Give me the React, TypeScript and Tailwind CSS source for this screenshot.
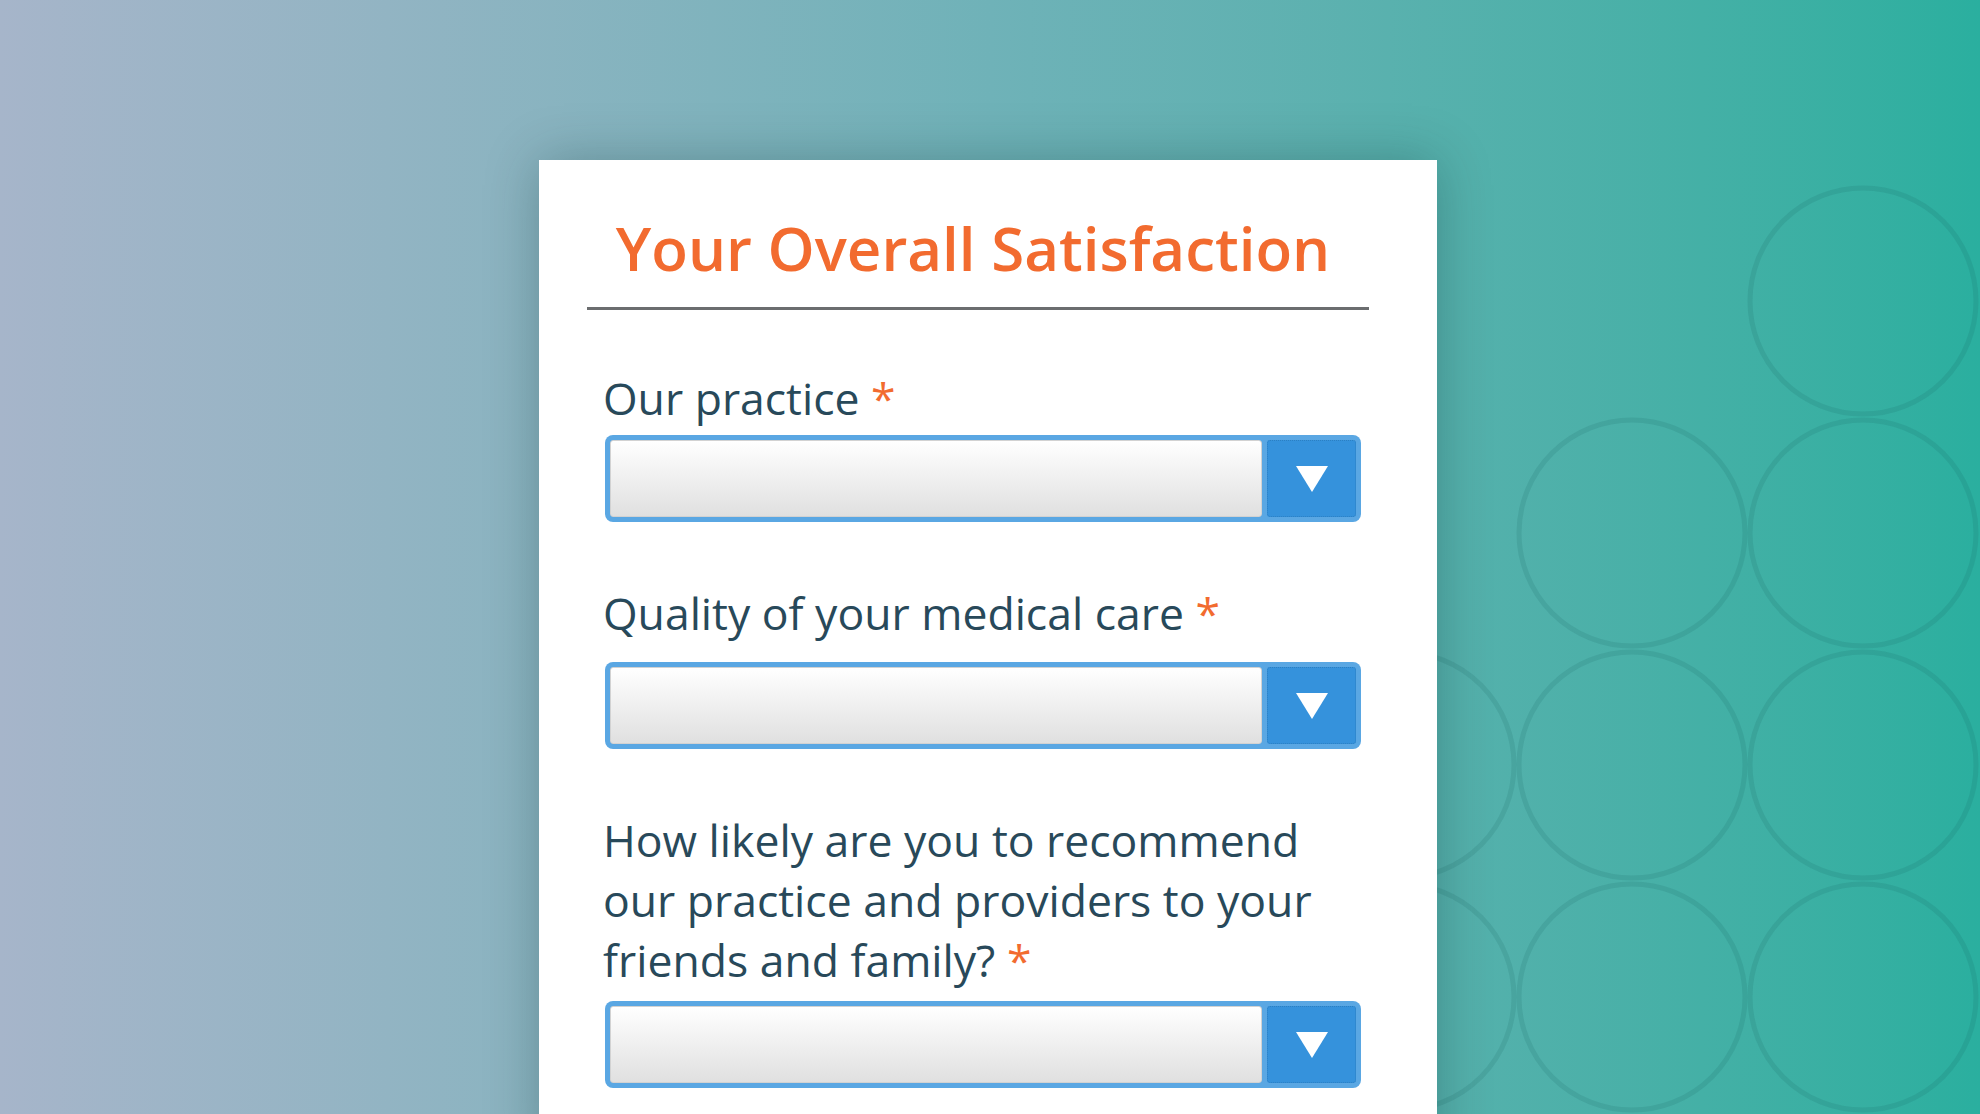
import React from "react";

const font = { fontFamily: '"Open Sans", "Noto Sans", sans-serif' };

// circle grid on the right side of the backdrop
const circles: [number, number][] = [
  [1863, 301],
  [1863, 533],
  [1863, 765],
  [1863, 997],
  [1632, 533],
  [1632, 765],
  [1632, 997],
  [1401, 765],
  [1401, 997],
];

function Select() {
  return (
    <div className="ml-[2px] flex h-[87px] gap-[5px] rounded-[8px] bg-[#5aa7e3] p-[5px]">
      <div className="flex-1 rounded-[3px] border border-[#d2d2d2] bg-gradient-to-b from-white to-[#e0e0e0]" />
      <div className="flex w-[89px] items-center justify-center rounded-[3px] border border-dotted border-[#2b7fc2] bg-[#3592dc]">
        <svg width="32" height="26" viewBox="0 0 32 26">
          <polygon points="0,0 32,0 16,26" fill="#ffffff" />
        </svg>
      </div>
    </div>
  );
}

function Label({ children, className }: { children: React.ReactNode; className?: string }) {
  return (
    <p className={`text-[44.5px] leading-[60px] text-[#28495a] ${className ?? ""}`}>
      {children} <span className="text-[#f26b2f]">*</span>
    </p>
  );
}

export default function App() {
  return (
    <div
      className="relative h-[1114px] w-[1980px] overflow-hidden bg-gradient-to-r from-[#a6b5ca] via-[#6fb2b8] to-[#2aaf9f]"
      style={font}
    >
      <svg className="absolute inset-0" width="1980" height="1114">
        {circles.map(([cx, cy]) => (
          <circle
            key={`${cx}-${cy}`}
            cx={cx}
            cy={cy}
            r={113}
            fill="none"
            stroke="rgba(20,95,90,0.14)"
            strokeWidth={5}
          />
        ))}
      </svg>

      <div className="relative ml-[539px] mt-[160px] h-[1000px] w-[898px] bg-white pl-[48px] pr-[68px] pt-[51px] shadow-[0_0_50px_rgba(0,40,40,0.28)]">
        {/* Header */}
        <div className="border-b-[3px] border-[#6b6d6f] pb-[22px] text-center">
          <h1 className="pr-[10px] text-[60px] font-semibold leading-[74px] text-[#f26b2f]">
            Your Overall Satisfaction
          </h1>
        </div>

        {/* Fields */}
        <div className="pl-[16px] pr-[8px]">
          <Label className="mt-[58px] mb-[7px]">Our practice</Label>
          <Select />

          <Label className="mt-[61px] mb-[19px]">Quality of your medical care</Label>
          <Select />

          <Label className="mt-[61px] mb-[11px]">
            How likely are you to recommend
            <br />
            our practice and providers to your
            <br />
            friends and family?
          </Label>
          <Select />
        </div>
      </div>
    </div>
  );
}
